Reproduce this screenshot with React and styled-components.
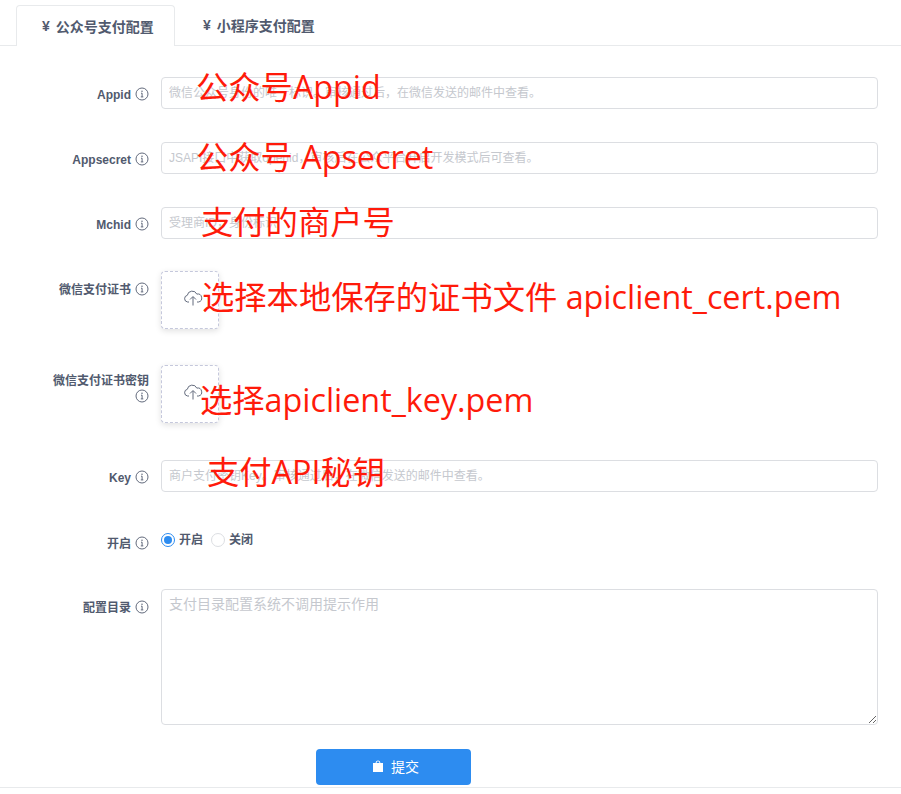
import React from 'react';
import styled, { createGlobalStyle } from 'styled-components';

const GlobalStyle = createGlobalStyle`
  html, body {
    margin: 0;
    padding: 0;
    background: #fff;
    font-family: "Liberation Sans", "Noto Sans CJK SC", sans-serif;
  }
  * {
    box-sizing: border-box;
  }
`;

const Page = styled.div`
  position: relative;
  width: 901px;
  height: 794px;
  overflow: hidden;
  padding-top: 5px;
`;

const TabBar = styled.div`
  display: flex;
  height: 41px;
  padding-left: 16px;
  border-bottom: 1px solid #e8eaec;
`;

const Tab = styled.div`
  display: flex;
  align-items: center;
  gap: 6px;
  width: ${({ $active }) => ($active ? '159px' : '157px')};
  height: ${({ $active }) => ($active ? '41px' : '40px')};
  padding-left: ${({ $active }) => ($active ? '25px' : '28px')};
  background: #fff;
  border: ${({ $active }) => ($active ? '1px solid #e8eaec' : 'none')};
  border-bottom: none;
  border-radius: 4px 4px 0 0;
  color: #515a6e;
  font-size: 14px;
  font-weight: 700;
`;

const Form = styled.form`
  display: flex;
  flex-direction: column;
  padding: 31px 23px 0 49px;
`;

const Row = styled.div`
  display: grid;
  grid-template-columns: 100px 1fr;
  column-gap: 12px;
  margin-bottom: ${({ $gap }) => $gap}px;
`;

const Label = styled.label`
  padding-top: ${({ $top }) => $top ?? 10}px;
  color: #515a6e;
  font-size: 12px;
  font-weight: 700;
  line-height: 15px;
  text-align: right;
`;

const InfoIcon = styled.svg`
  display: inline-block;
  width: 14px;
  height: 14px;
  margin-left: 4px;
  vertical-align: -2px;
`;

const Input = styled.input`
  display: block;
  width: 100%;
  height: 32px;
  padding: 0 7px;
  border: 1px solid #dcdee2;
  border-radius: 4px;
  outline: none;
  font-family: inherit;
  font-size: 12px;
  &::placeholder {
    color: #c5c8ce;
    opacity: 1;
  }
`;

const TextArea = styled.textarea`
  display: block;
  width: 100%;
  height: 136px;
  padding: 4px 7px;
  border: 1px solid #dcdee2;
  border-radius: 4px;
  outline: none;
  font-family: inherit;
  font-size: 14px;
  line-height: 20px;
  &::placeholder {
    color: #c5c8ce;
    opacity: 1;
  }
`;

const Upload = styled.div`
  display: flex;
  align-items: center;
  justify-content: center;
  width: 58px;
  height: 58px;
  background: #fff;
  border: 1px dashed #c5c8dc;
  border-radius: 4px;
  box-shadow: 0 2px 6px rgba(0, 0, 0, 0.12);
`;

const RadioGroup = styled.div`
  display: flex;
  align-items: center;
  gap: 8px;
  height: 14px;
  margin-top: 3px;
`;

const RadioItem = styled.span`
  display: flex;
  align-items: center;
  gap: 4px;
  color: #515a6e;
  font-size: 12px;
  font-weight: 700;
`;

const RadioText = styled.span`
  padding-bottom: 3px;
`;

const RadioDot = styled.span`
  display: flex;
  align-items: center;
  justify-content: center;
  width: 14px;
  height: 14px;
  border: 1px solid ${({ $on }) => ($on ? '#2d8cf0' : '#dcdee2')};
  border-radius: 50%;
  &::after {
    content: '';
    display: ${({ $on }) => ($on ? 'block' : 'none')};
    width: 8px;
    height: 8px;
    background: #2d8cf0;
    border-radius: 50%;
  }
`;

const Footer = styled.div`
  height: 38px;
  padding-left: 267px;
`;

const SubmitButton = styled.button`
  display: flex;
  align-items: center;
  justify-content: center;
  gap: 8px;
  width: 155px;
  height: 36px;
  padding: 0 0 2px 5px;
  background: #2d8cf0;
  border: none;
  border-radius: 4px;
  color: #fff;
  font-family: inherit;
  font-size: 14px;
`;

const BottomRule = styled.div`
  height: 1px;
  background: #e8eaec;
`;

const Note = styled.span`
  position: absolute;
  left: ${({ $x }) => $x}px;
  top: ${({ $y }) => $y}px;
  color: #ff1a0a;
  font-family: "Open Sans", "Noto Sans CJK SC", sans-serif;
  font-size: 32.3px;
  line-height: 40px;
  white-space: nowrap;
`;

const Info = () => (
  <InfoIcon viewBox="0 0 14 14" fill="none" stroke="#515a6e">
    <circle cx="7" cy="7" r="6" strokeWidth="0.9" />
    <path d="M6 6.2h1.1v3.6M5.8 9.9h2.5" strokeWidth="0.9" />
    <circle cx="7" cy="4.2" r="0.7" fill="#515a6e" stroke="none" />
  </InfoIcon>
);

const CloudIcon = () => (
  <svg width="20" height="20" viewBox="0 0 20 20" fill="none" stroke="#515a6e" strokeWidth="0.9" style={{ marginLeft: 5 }}>
    <path d="M6 12H4.6A3.4 3.4 0 0 1 4.3 5.3 5 5 0 0 1 13.8 4.1a3.9 3.9 0 0 1 1.7 7.9H14" />
    <path d="M10 15.5V7M7 9.5l3-3 3 3" />
  </svg>
);

const BagIcon = () => (
  <svg width="10" height="12" viewBox="0 0 10 12" fill="#fff">
    <path d="M0 3h2.6C2.7 1.4 3.6.4 5 .4s2.3 1 2.4 2.6H10v9H0zM3.6 3h2.8C6.3 2 5.8 1.3 5 1.3S3.7 2 3.6 3z" />
  </svg>
);

const App = () => (
  <Page>
    <GlobalStyle />
    <TabBar>
      <Tab $active>
        <span>¥</span>
        <span>公众号支付配置</span>
      </Tab>
      <Tab>
        <span>¥</span>
        <span>小程序支付配置</span>
      </Tab>
    </TabBar>
    <Form>
      <Row $gap={33}>
        <Label>Appid<Info /></Label>
        <Input placeholder="微信公众号身份的唯一标识。审核通过后，在微信发送的邮件中查看。" />
      </Row>
      <Row $gap={33}>
        <Label>Appsecret<Info /></Label>
        <Input placeholder="JSAPI接口中获取openid，审核后在公众平台开启开发模式后可查看。" />
      </Row>
      <Row $gap={32}>
        <Label>Mchid<Info /></Label>
        <Input placeholder="受理商ID，身份标识" />
      </Row>
      <Row $gap={36}>
        <Label $top={11}>微信支付证书<Info /></Label>
        <Upload><CloudIcon /></Upload>
      </Row>
      <Row $gap={37}>
        <Label $top={9}>微信支付证书密钥<Info /></Label>
        <Upload><CloudIcon /></Upload>
      </Row>
      <Row $gap={38}>
        <Label>Key<Info /></Label>
        <Input placeholder="商户支付密钥Key。审核通过后，在微信发送的邮件中查看。" />
      </Row>
      <Row $gap={37}>
        <Label $top={6}>开启<Info /></Label>
        <RadioGroup>
          <RadioItem><RadioDot $on /><RadioText>开启</RadioText></RadioItem>
          <RadioItem><RadioDot /><RadioText>关闭</RadioText></RadioItem>
        </RadioGroup>
      </Row>
      <Row $gap={24}>
        <Label $top={11}>配置目录<Info /></Label>
        <TextArea placeholder="支付目录配置系统不调用提示作用" />
      </Row>
      <Footer>
        <SubmitButton type="button"><BagIcon />提交</SubmitButton>
      </Footer>
    </Form>
    <BottomRule />
    <Note $x={196} $y={66}>公众号Appid</Note>
    <Note $x={196} $y={136}>公众号 Apsecret</Note>
    <Note $x={201} $y={201}>支付的商户号</Note>
    <Note $x={202} $y={276}>选择本地保存的证书文件 apiclient_cert.pem</Note>
    <Note $x={200} $y={379}>选择apiclient_key.pem</Note>
    <Note $x={207} $y={451}>支付API秘钥</Note>
  </Page>
);

export default App;
